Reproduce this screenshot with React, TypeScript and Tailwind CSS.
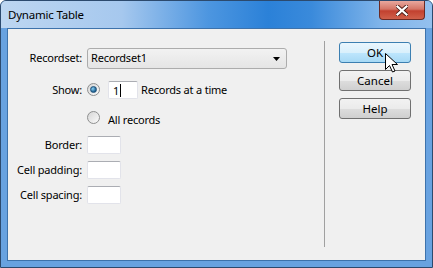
import React from 'react';

const font = { fontFamily: '"Noto Sans", "Open Sans", sans-serif' };

const Radio = ({ checked }: { checked?: boolean }) => (
  <div className="w-[13px] h-[13px] rounded-full border border-[#8e8f8f] bg-gradient-to-br from-[#d6d6d6] to-[#fbfbfb] flex items-center justify-center shrink-0">
    {checked && (
      <div className="w-[7px] h-[7px] rounded-full bg-[radial-gradient(circle_at_35%_35%,#8ad2f6,#1c5e8f_70%)] border border-[#1d4f78]" />
    )}
  </div>
);

const TextBox = ({ w, children }: { w: string; children?: React.ReactNode }) => (
  <div
    className={`${w} h-[18px] bg-white border border-[#e2e3ea] border-t-[#abadb3] rounded-[2px] flex items-center pl-[4px] text-[11px] text-black leading-none`}
  >
    {children}
  </div>
);

const Button = ({ label, active }: { label: string; active?: boolean }) => (
  <div
    className={
      active
        ? 'h-[21px] w-[72px] rounded-[3px] border border-[#3c7fb1] bg-[linear-gradient(#eaf6fd_0%,#d9f0fc_50%,#bee6fd_51%,#a7d9f5_100%)] flex items-center justify-center text-[11.5px] text-black'
        : 'h-[21px] w-[72px] rounded-[3px] border border-[#707070] bg-[linear-gradient(#f2f2f2_0%,#ebebeb_50%,#dddddd_51%,#cfcfcf_100%)] flex items-center justify-center text-[11.5px] text-black'
    }
  >
    {label}
  </div>
);

const Label = ({ children }: { children: React.ReactNode }) => (
  <div className="w-[74px] text-right text-[11px] tracking-[-0.2px] text-black shrink-0">{children}</div>
);

export default function App() {
  return (
    <div
      style={font}
      className="w-[433px] h-[268px] bg-[#68a2e0] border border-[#2c4a6e] rounded-t-[6px] flex flex-col overflow-hidden relative"
    >
      <div className="h-[27px] shrink-0 flex items-start justify-between bg-[linear-gradient(90deg,#bdd6f1_0%,#a6c8ee_28%,#4d96e0_48%,#2b81d8_62%,#3a8adb_72%,#7fb4ea_88%,#94c0ee_100%)]">
        <div className="pl-[7px] pt-[5px] text-[11.5px] tracking-[-0.2px] text-black">Dynamic Table</div>
        <div className="mr-[7px] w-[46px] h-[19px] rounded-b-[4px] border border-t-0 border-[#6b2a24] bg-[linear-gradient(#e8a89e_0%,#d47566_45%,#c2412f_55%,#d0604a_100%)] flex items-center justify-center">
          <svg width="12" height="11" viewBox="0 0 12 11">
            <path d="M1.5 1.5L10.5 9.5M10.5 1.5L1.5 9.5" stroke="#4a1a14" strokeWidth="4" strokeLinecap="square" />
            <path d="M1.5 1.5L10.5 9.5M10.5 1.5L1.5 9.5" stroke="#fff" strokeWidth="2.2" strokeLinecap="square" />
          </svg>
        </div>
      </div>
      <div className="flex-1 mx-[6px] mb-[6px] border border-[#3d72ab] bg-[#f0f0f0] flex">
        <div className="w-[316px] flex flex-col pt-[19px]">
          <div className="flex items-center h-[21px] gap-[5px]">
            <Label>Recordset:</Label>
            <div className="w-[200px] h-[21px] rounded-[3px] border border-[#acacac] bg-[linear-gradient(#f2f2f2,#e5e5e5)] flex items-center justify-between pl-[3px] pr-[6px] text-[11px] tracking-[-0.2px] text-black">
              <span>Recordset1</span>
              <svg width="7" height="4" viewBox="0 0 7 4">
                <path d="M0 0H7L3.5 4Z" fill="#000" />
              </svg>
            </div>
          </div>
          <div className="flex items-center h-[18px] gap-[5px] mt-[12px]">
            <Label>Show:</Label>
            <div className="-mt-[2px]">
              <Radio checked />
            </div>
            <div className="ml-[3px]">
              <TextBox w="w-[30px]">
                <span>1</span>
                <span className="w-px h-[13px] bg-black ml-px" />
              </TextBox>
            </div>
            <span className="-ml-[2px] text-[11px] tracking-[-0.2px] text-black">Records at a time</span>
          </div>
          <div className="flex items-center h-[18px] gap-[8px] mt-[12px] pl-[79px]">
            <div className="-mt-[6px]">
              <Radio />
            </div>
            <span className="text-[11px] tracking-[-0.2px] text-black">All records</span>
          </div>
          <div className="flex items-center h-[18px] gap-[5px] mt-[7px]">
            <Label>Border:</Label>
            <TextBox w="w-[34px]" />
          </div>
          <div className="flex items-center h-[18px] gap-[5px] mt-[7px]">
            <Label>Cell padding:</Label>
            <TextBox w="w-[34px]" />
          </div>
          <div className="flex items-center h-[18px] gap-[5px] mt-[7px]">
            <Label>Cell spacing:</Label>
            <TextBox w="w-[34px]" />
          </div>
        </div>
        <div className="w-px bg-[#a0a0a0] mt-[12px] mb-[13px]" />
        <div className="flex flex-col gap-[7px] pt-[13px] pl-[14px]">
          <Button label="OK" active />
          <Button label="Cancel" />
          <Button label="Help" />
        </div>
      </div>
      <svg className="absolute left-[384px] top-[52px]" width="13" height="20" viewBox="0 0 13 20">
        <path d="M0.5 0.5V16.5L4.5 12.5L7.5 19L10 18L7 11.5H12.5Z" fill="#fff" stroke="#000" strokeWidth="1" strokeLinejoin="miter" />
      </svg>
    </div>
  );
}
